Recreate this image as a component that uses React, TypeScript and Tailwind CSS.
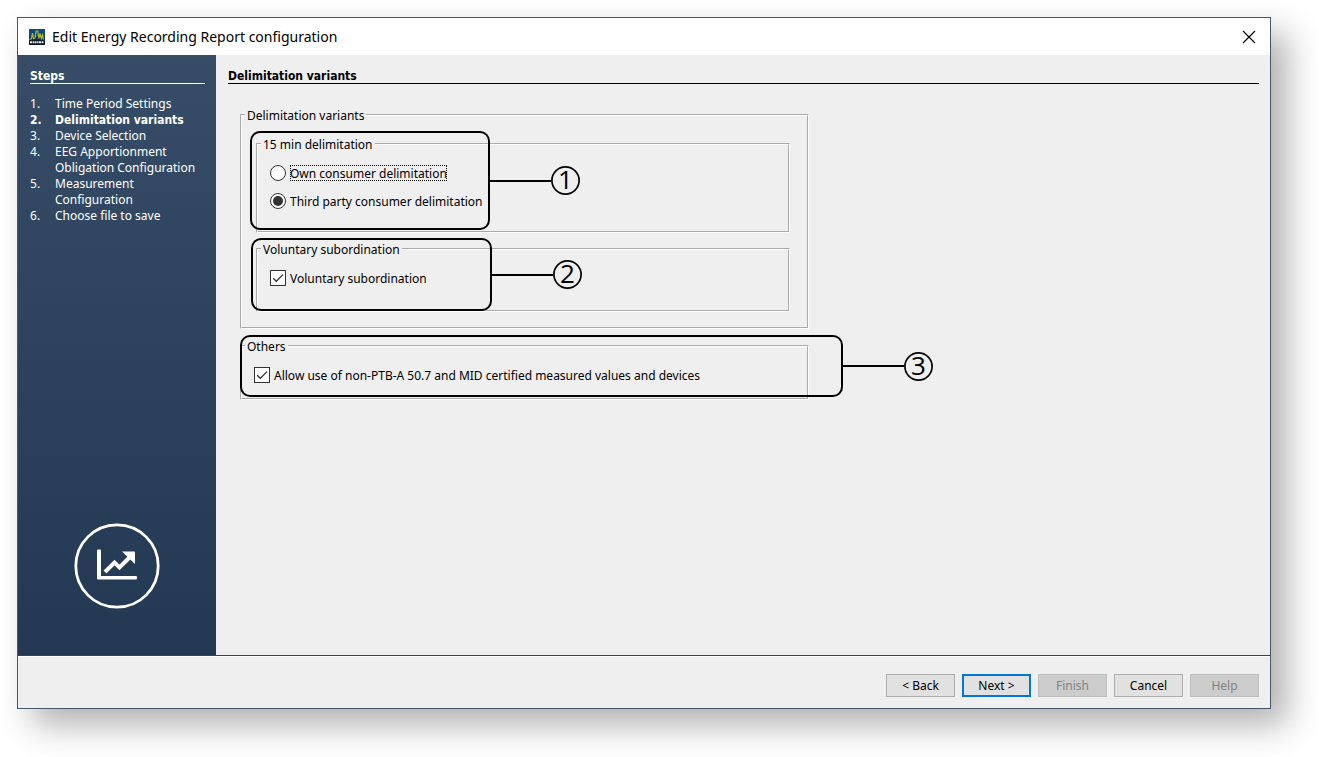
import { useState } from "react";
import type { ReactNode } from "react";

const steps = [
  "Time Period Settings",
  "Delimitation variants",
  "Device Selection",
  "EEG Apportionment Obligation Configuration",
  "Measurement Configuration",
  "Choose file to save",
];
const currentStep = 1;

const boldText = "font-['DejaVu_Sans_Condensed','DejaVu_Sans',sans-serif] font-bold";
const labelText = "pt-0.5 leading-[14px]";

function AppIcon() {
  return (
    <svg viewBox="0 0 16 16" className="size-4 shrink-0" aria-hidden="true">
      <rect width="16" height="16" rx="1" fill="#0d2f52" />
      <rect y="0" width="16" height="8" rx="1" fill="#0c4a80" />
      <rect y="11.5" width="16" height="4.5" rx="1" fill="#10151c" />
      <path
        d="M.5 10.5 2.5 9.5 3.5 4 4.5 9.5 6 9 7.2 2 8.8 2 9.8 9.5 11 4.5 12.3 9.5 13.5 6 14.5 10.5"
        fill="none"
        stroke="#b3b52c"
        strokeWidth="1.2"
      />
      <path d="M1 13.2H15" stroke="#e8ecef" strokeWidth="2" strokeDasharray="2 .6 1.4 .5" />
    </svg>
  );
}

function TrendIcon() {
  return (
    <svg viewBox="0 0 86 86" className="size-[86px]" aria-hidden="true">
      <circle cx="43" cy="43" r="41.2" fill="none" stroke="#fff" strokeWidth="2.8" />
      <path d="M23 27.5a1 1 0 0 1 1-1h2a1 1 0 0 1 1 1V53H62a1 1 0 0 1 1 1v1.5a1 1 0 0 1-1 1H24a1 1 0 0 1-1-1z" fill="#fff" />
      <path d="M31 49 40.5 39.5 45.5 44.5 56 34" fill="none" stroke="#fff" strokeWidth="4" />
      <path d="M48 28.5H60a1 1 0 0 1 1 1V41z" fill="#fff" />
    </svg>
  );
}

function Group({ title, className, children }: { title: string; className: string; children: ReactNode }) {
  return (
    <fieldset className={`border-2 border-white [border-style:groove] ${className}`}>
      <legend className={`-ml-[9px] px-0.5 ${labelText}`}>{title}</legend>
      {children}
    </fieldset>
  );
}

function Callout({ n, className }: { n: number; className: string }) {
  return (
    <div className={`pointer-events-none absolute ${className}`}>
      <div className="h-full rounded-[10px] border-2 border-black" />
      <div className="absolute inset-y-0 left-full flex items-center">
        <div className="h-0.5 w-[61px] bg-black" />
        <div className="grid size-[29px] place-items-center">
          <svg viewBox="0 0 29 29" className="col-start-1 row-start-1 size-[29px]" aria-hidden="true">
            <circle cx="14.5" cy="14.5" r="13.6" fill="none" stroke="#000" strokeWidth="1.7" />
          </svg>
          <span className="col-start-1 row-start-1 pb-[3px] font-['Open_Sans',sans-serif] text-[26px] leading-[26px]">{n}</span>
        </div>
      </div>
    </div>
  );
}

function Radio({ label, checked, focused, onSelect }: { label: string; checked: boolean; focused: boolean; onSelect: () => void }) {
  return (
    <label className="flex items-center gap-1">
      <input
        type="radio"
        name="delimitation"
        checked={checked}
        onChange={onSelect}
        className="size-4 appearance-none rounded-full border border-[#333] bg-white p-0.5 before:block before:size-full before:rounded-full checked:before:bg-[#333]"
      />
      <span className={`${labelText} ${focused ? "outline-1 -outline-offset-1 outline-dotted outline-black" : ""}`}>{label}</span>
    </label>
  );
}

function Check({ label }: { label: string }) {
  return (
    <label className="flex items-center gap-1">
      <span className="grid size-4">
        <input
          type="checkbox"
          defaultChecked
          className="peer col-start-1 row-start-1 size-4 appearance-none border border-[#333] bg-white"
        />
        <svg viewBox="0 0 16 16" className="pointer-events-none invisible col-start-1 row-start-1 size-4 peer-checked:visible" aria-hidden="true">
          <path d="M3.2 8.2 6.3 11.3 13 4.6" fill="none" stroke="#333" strokeWidth="1.3" />
        </svg>
      </span>
      <span className={labelText}>{label}</span>
    </label>
  );
}

const buttonBase = "h-[23px] w-[69px] border";
const buttonPlain = "border-[#adadad] bg-[#e1e1e1]";
const buttonDisabled = "border-[#bfbfbf] bg-[#ccc] text-[#838383]";

export default function App() {
  const [ownConsumer, setOwnConsumer] = useState(false);

  return (
    <div className="flex min-h-screen bg-white pt-[17px] pr-12 pb-12 pl-[17px] font-['Noto_Sans','DejaVu_Sans',sans-serif] text-[12px] leading-4 text-black">
      <div className="flex flex-1 flex-col border border-[#44586c] bg-[#efefef] shadow-[16px_16px_32px_rgba(0,0,0,0.31)]">
        <header className="flex h-[37px] items-center gap-[7px] bg-white pr-[14px] pl-[11px]">
          <AppIcon />
          <h1 className="flex-1 text-[14px]">
            Edit Energy Recording Report configuration
          </h1>
          <button type="button" aria-label="Close">
            <svg viewBox="0 0 14 14" className="size-[14px]" aria-hidden="true">
              <path d="M1 1 13 13M13 1 1 13" stroke="#000" strokeWidth="1.2" />
            </svg>
          </button>
        </header>

        <div className="flex flex-1">
          <aside className="flex w-[198px] flex-col bg-linear-to-b from-[#374d67] to-[#233852] pt-3 pr-[11px] pb-[46px] pl-3 text-white">
            <h2 className={`border-b border-white ${labelText} ${boldText}`}>Steps</h2>
            <ol className="mt-3">
              {steps.map((step, i) => (
                <li key={step} className={`flex ${i === currentStep ? boldText : ""}`}>
                  <span className="w-[25px] shrink-0">{i + 1}.</span>
                  <span>{step}</span>
                </li>
              ))}
            </ol>
            <div className="mt-auto flex justify-center pr-0.5">
              <TrendIcon />
            </div>
          </aside>

          <main className="flex-1 pt-3 pr-[11px] pl-3">
            <h2 className={`border-b border-black ${labelText} ${boldText}`}>Delimitation variants</h2>
            <div className="ml-3 flex w-[569px] flex-col gap-[9px] pt-[23px]">
              <Group title="Delimitation variants" className="pt-[13px] pr-[17px] pb-[15px] pl-3">
                <div className="ml-0.5 flex flex-col gap-2">
                  <div className="relative">
                    <Group title="15 min delimitation" className="pt-[13px] pb-[22px] pl-3">
                      <div className="flex flex-col gap-3">
                        <Radio label="Own consumer delimitation" checked={ownConsumer} focused onSelect={() => setOwnConsumer(true)} />
                        <Radio label="Third party consumer delimitation" checked={!ownConsumer} focused={false} onSelect={() => setOwnConsumer(false)} />
                      </div>
                    </Group>
                    <Callout n={1} className="-top-[5px] -left-1.5 h-[99px] w-60" />
                  </div>
                  <div className="relative">
                    <Group title="Voluntary subordination" className="pt-[13px] pb-6 pl-3">
                      <Check label="Voluntary subordination" />
                    </Group>
                    <Callout n={2} className="-top-[3px] -left-[5px] h-[73px] w-[241px]" />
                  </div>
                </div>
              </Group>
              <div className="relative">
                <Group title="Others" className="pt-[13px] pb-[15px] pl-3">
                  <Check label="Allow use of non-PTB-A 50.7 and MID certified measured values and devices" />
                </Group>
                <Callout n={3} className="-top-[3px] left-0 h-[62px] w-[603px]" />
              </div>
            </div>
          </main>
        </div>

        <footer className="flex justify-end gap-[7px] border-t border-[#404040] pt-[18px] pr-[11px] pb-[11px] shadow-[inset_0_1px_0_#fff]">
          <button type="button" className={`${buttonBase} ${buttonPlain}`}>&lt; Back</button>
          <button type="button" className="h-[23px] w-[69px] border-2 border-[#0078d7] bg-[#e1e1e1]">Next &gt;</button>
          <button type="button" disabled className={`${buttonBase} ${buttonDisabled}`}>Finish</button>
          <button type="button" className={`${buttonBase} ${buttonPlain}`}>Cancel</button>
          <button type="button" disabled className={`${buttonBase} ${buttonDisabled}`}>Help</button>
        </footer>
      </div>
    </div>
  );
}
